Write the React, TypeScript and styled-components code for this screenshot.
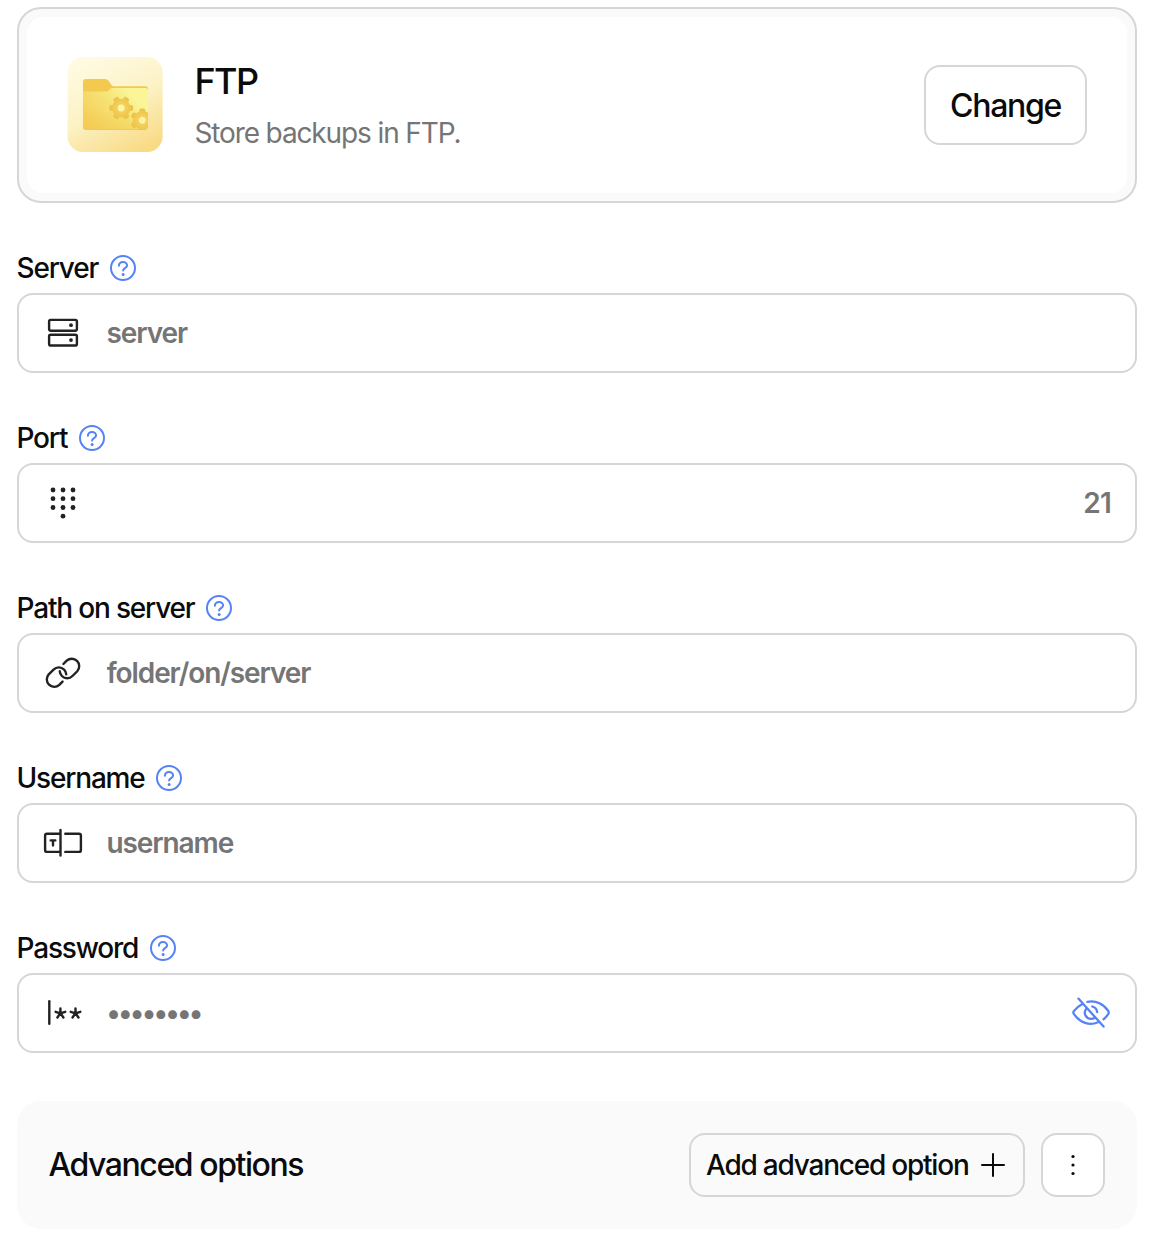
import React from "react";
import styled, { createGlobalStyle } from "styled-components";

const line = "#d6d6d6";
const ink = "#0b0b0c";
const blue = "#5583f7";
const glyph = "#222222";

const GlobalStyle = createGlobalStyle`
  *, *::before, *::after { box-sizing: border-box; }
  body {
    margin: 0;
    background: #fff;
    color: ${ink};
    font-family: Inter, "Liberation Sans", sans-serif;
  }
`;

const Page = styled.main`
  width: 1158px;
  height: 1248px;
  padding: 7px 21px 19px 17px;
  display: flex;
  flex-direction: column;
`;

const Card = styled.section`
  height: 196px;
  padding: 8px;
  border: 2px solid ${line};
  border-radius: 24px;
  background: #fafafa;
`;

const CardBody = styled.div`
  height: 100%;
  padding: 0 40px;
  border-radius: 16px;
  background: #fff;
  display: flex;
  align-items: center;
`;

const CardText = styled.div`
  flex: 1;
  margin-left: 31.4px;
`;

const CardTitle = styled.h2`
  margin: 0;
  font-size: 36px;
  line-height: 48px;
  font-weight: 500;
  letter-spacing: -1.5px;
`;

const CardNote = styled.p`
  margin: 8px 0 0;
  font-size: 28px;
  line-height: 40px;
  letter-spacing: -1.12px;
  color: #757575;
`;

const Button = styled.button<{ $w: number; $h: number; $size?: number; $plain?: boolean; $track?: number }>`
  width: ${(p) => p.$w}px;
  height: ${(p) => p.$h}px;
  padding: 0 ${(p) => (p.$plain ? 3 : 0)}px 0 0;
  border: 2px solid ${line};
  border-radius: 16px;
  background: ${(p) => (p.$plain ? "transparent" : "#fff")};
  color: ${ink};
  font-family: inherit;
  font-weight: 500;
  font-size: ${(p) => p.$size ?? 28}px;
  letter-spacing: ${(p) => p.$track ?? 0}px;
  white-space: nowrap;
  display: flex;
  align-items: center;
  justify-content: center;
  gap: 12.5px;
`;

const Fields = styled.div`
  margin-top: 45px;
  display: flex;
  flex-direction: column;
  gap: 45px;
`;

const Field = styled.div`
  display: flex;
  flex-direction: column;
  gap: 5px;
`;

const Label = styled.label`
  height: 40px;
  display: flex;
  align-items: center;
  gap: 11.6px;
  font-size: 28px;
  font-weight: 500;
  letter-spacing: -1.18px;
  text-indent: -0.5px;
`;

const Box = styled.div`
  height: 80px;
  border: 2px solid ${line};
  border-radius: 16px;
  display: flex;
  align-items: center;
  padding: 0 24px;
`;

const Input = styled.input<{ $end?: boolean; $track?: number }>`
  flex: 1;
  min-width: 0;
  height: 100%;
  margin-left: 23.5px;
  padding: 0;
  border: 0;
  outline: 0;
  background: transparent;
  font-family: inherit;
  font-size: 28px;
  font-weight: 600;
  letter-spacing: ${(p) => p.$track ?? -1.1}px;
  text-align: ${(p) => (p.$end ? "right" : "left")};
  &::placeholder { color: #757575; opacity: 1; }
`;

const Advanced = styled.section`
  height: 128px;
  margin-top: 48px;
  padding: 0 32px 0 31.4px;
  border-radius: 24px;
  background: #fafafa;
  display: flex;
  align-items: center;
  gap: 16px;
`;

const AdvancedTitle = styled.h3`
  flex: 1;
  margin: 0;
  padding-bottom: 1px;
  font-size: 32px;
  font-weight: 500;
  letter-spacing: -1.42px;
`;

const Svg = styled.svg`
  display: block;
  flex: none;
`;

const gearTeeth = [0, 60, 120, 180, 240, 300];

function Gear({ x, y, turn }: { x: number; y: number; turn: number }) {
  return (
    <g transform={`translate(${x} ${y}) rotate(${turn})`}>
      <g fill="url(#gear)">
        <circle r="9.2" />
        {gearTeeth.map((a) => (
          <rect key={a} x="5" y="-3" width="6.9" height="6" rx="2" transform={`rotate(${a})`} />
        ))}
      </g>
      <circle r="3.4" fill="#fcf3a8" />
    </g>
  );
}

function FolderTile() {
  return (
    <Svg width="96" height="96" viewBox="0 0 96 96">
      <defs>
        <linearGradient id="tile" x1="0.25" y1="0" x2="0.75" y2="1">
          <stop offset="0" stopColor="#fffbe2" />
          <stop offset="0.5" stopColor="#fcf2c6" />
          <stop offset="1" stopColor="#f8db84" />
        </linearGradient>
        <linearGradient id="front" x1="0" y1="0.75" x2="0.95" y2="0.2">
          <stop offset="0" stopColor="#f4ce58" />
          <stop offset="0.5" stopColor="#f6e274" />
          <stop offset="0.85" stopColor="#faf596" />
        </linearGradient>
        <linearGradient id="shade" x1="0" y1="0" x2="0" y2="1">
          <stop offset="0.5" stopColor="#f4cb52" stopOpacity="0" />
          <stop offset="1" stopColor="#f4cb52" stopOpacity="0.45" />
        </linearGradient>
        <radialGradient id="gear" gradientUnits="userSpaceOnUse" cx="0" cy="0" r="12">
          <stop offset="0.25" stopColor="#f5d35c" />
          <stop offset="1" stopColor="#ebc04a" />
        </radialGradient>
        <clipPath id="folderClip">
          <rect x="16" y="30.5" width="65" height="42.5" rx="2.5" />
        </clipPath>
      </defs>
      <rect x="0.6" y="0.1" width="95" height="95" rx="15.5" fill="url(#tile)" />
      <path d="M19 22H38Q40 22 41.3 23.6L44.5 28Q45.5 29.2 47 29.2H78.5Q81 29.2 81 32V70Q81 73 78 73H19Q16 73 16 70V25Q16 22 19 22Z" fill="#f3c950" />
      <path d="M16 34.5H39C43 34.5 42 31 46 31H78.5Q81 31 81 33.5V69.5Q81 72 78.5 72H18.5Q16 72 16 69.5Z" fill="url(#front)" />
      <path d="M16 34.5H39C43 34.5 42 31 46 31H78.5Q81 31 81 33.5V69.5Q81 72 78.5 72H18.5Q16 72 16 69.5Z" fill="url(#shade)" />
      <g clipPath="url(#folderClip)">
        <Gear x={54.2} y={51} turn={0} />
        <Gear x={75.3} y={63.3} turn={30} />
      </g>
    </Svg>
  );
}

function Help() {
  return (
    <Svg width="26" height="26" viewBox="0 0 26 26" fill="none" stroke={blue} strokeWidth="2" strokeLinecap="round">
      <circle cx="13" cy="13" r="12" />
      <path d="M8.9 10.8C8.9 8.5 10.7 6.9 13 6.9S17.1 8.4 17.1 10.5C17.1 13.1 13.1 13.2 13.1 15.6" />
      <circle cx="13.1" cy="19.5" r="1.5" fill={blue} stroke="none" />
    </Svg>
  );
}

function FieldIcon({ children }: { children: React.ReactNode }) {
  return (
    <Svg width="40" height="40" viewBox="0 0 40 40" fill="none" stroke={glyph} strokeWidth="2.4" strokeLinecap="round" strokeLinejoin="round">
      {children}
    </Svg>
  );
}

const ServerIcon = () => (
  <FieldIcon>
    <rect x="6.1" y="6.9" width="27.8" height="10.8" rx="1.6" />
    <rect x="6.1" y="21.7" width="27.8" height="10.8" rx="1.6" />
    <circle cx="28" cy="12.2" r="1.9" fill={glyph} stroke="none" />
    <circle cx="28" cy="27.1" r="1.9" fill={glyph} stroke="none" />
  </FieldIcon>
);

const padDots = [[10, 7], [20, 7], [30, 7], [10, 15.7], [20, 15.7], [30, 15.7], [10, 24.5], [20, 24.5], [30, 24.5], [20, 33.2]];

const PadIcon = () => (
  <FieldIcon>
    {padDots.map(([x, y]) => (
      <circle key={`${x}-${y}`} cx={x} cy={y} r="2.4" fill={glyph} stroke="none" />
    ))}
  </FieldIcon>
);

const LinkIcon = () => (
  <FieldIcon>
    <g transform="translate(-1.7 -1.9) scale(0.1695)" strokeWidth="14">
      <path d="M130.5 76.2L149.8 56.6a44.1 44.1 0 0 1 62.3 62.3l-28.3 28.2a43.9 43.9 0 0 1-62.2 0Q110.5 135 108.9 119" />
      <path d="M125.5 179.8L106.2 199.4a44.1 44.1 0 0 1-62.3-62.3l28.3-28.2a43.9 43.9 0 0 1 62.2 0Q145.5 121 147.1 137" />
    </g>
  </FieldIcon>
);

const TextIcon = () => (
  <FieldIcon>
    <path d="M17.5 7V32.6M17.5 10.7H4Q2.1 10.7 2.1 12.7V26.9Q2.1 28.9 4 28.9H17.5M22.3 10.7H36Q37.9 10.7 37.9 12.7V26.9Q37.9 28.9 36 28.9H22.3" />
    <path d="M7.7 17.4H12.3M10 17.4V22.4" />
  </FieldIcon>
);

function Star({ x }: { x: number }) {
  return (
    <path transform={`translate(${x} 20.3)`} d="M0 0V-4.9M0 0L4.8 -1.5M0 0L3 4.2M0 0L-3 4.2M0 0L-4.8 -1.5" />
  );
}

const PasswordIcon = () => (
  <FieldIcon>
    <path d="M6.3 8.3V30.8" />
    <Star x={17.4} />
    <Star x={32.5} />
  </FieldIcon>
);

const EyeOff = () => (
  <Svg width="40" height="40" viewBox="0 0 40 40" fill="none" stroke={blue} strokeWidth="2.3" strokeLinecap="round" strokeLinejoin="round">
    <path d="M7.4 5.6L32.6 33.6" />
    <path d="M16.5 8.9C25 7 33 11.5 37.4 18.2Q38.1 19.5 37.4 20.9Q35.3 24 32.5 26.3" />
    <path d="M11 11.3Q5.8 14 2.8 18.2Q1.9 19.5 2.8 20.9C9.2 30 18.5 33 27 29.2" />
    <path d="M15.3 15.6C11.8 20 14.8 25.8 20 25.8Q22.1 25.8 23.8 24.7M21.3 13.5Q25.7 14.6 26.2 19.1" />
  </Svg>
);

interface FieldSpec {
  name: string;
  hint: string;
  icon: React.ReactNode;
  end?: boolean;
  track?: number;
  trailing?: React.ReactNode;
}

const fields: FieldSpec[] = [
  { name: "Server", hint: "server", icon: <ServerIcon /> },
  { name: "Port", hint: "21", icon: <PadIcon />, end: true, track: -0.8 },
  { name: "Path on server", hint: "folder/on/server", icon: <LinkIcon /> },
  { name: "Username", hint: "username", icon: <TextIcon /> },
  { name: "Password", hint: "••••••••", icon: <PasswordIcon />, track: -2.3, trailing: <EyeOff /> },
];

export default function App() {
  return (
    <>
      <GlobalStyle />
      <Page>
        <Card>
          <CardBody>
            <FolderTile />
            <CardText>
              <CardTitle>FTP</CardTitle>
              <CardNote>Store backups in FTP.</CardNote>
            </CardText>
            <Button $w={163} $h={80} $size={32} $track={-1.3}>Change</Button>
          </CardBody>
        </Card>
        <Fields>
          {fields.map((f) => (
            <Field key={f.name}>
              <Label htmlFor={f.name}>
                {f.name}
                <Help />
              </Label>
              <Box>
                {f.icon}
                <Input id={f.name} placeholder={f.hint} $end={f.end} $track={f.track} />
                {f.trailing}
              </Box>
            </Field>
          ))}
        </Fields>
        <Advanced>
          <AdvancedTitle>Advanced options</AdvancedTitle>
          <Button $w={336} $h={64} $plain $track={-1.22}>
            Add advanced option
            <Svg width="24" height="24" viewBox="0 0 24 24" stroke={ink} strokeWidth="2" strokeLinecap="round">
              <path d="M12 1V23M1 12H23" />
            </Svg>
          </Button>
          <Button $w={64} $h={64} aria-label="More">
            <Svg width="24" height="24" viewBox="0 0 24 24" fill={ink}>
              <circle cx="12" cy="3.5" r="1.6" />
              <circle cx="12" cy="12" r="1.6" />
              <circle cx="12" cy="20.5" r="1.6" />
            </Svg>
          </Button>
        </Advanced>
      </Page>
    </>
  );
}
